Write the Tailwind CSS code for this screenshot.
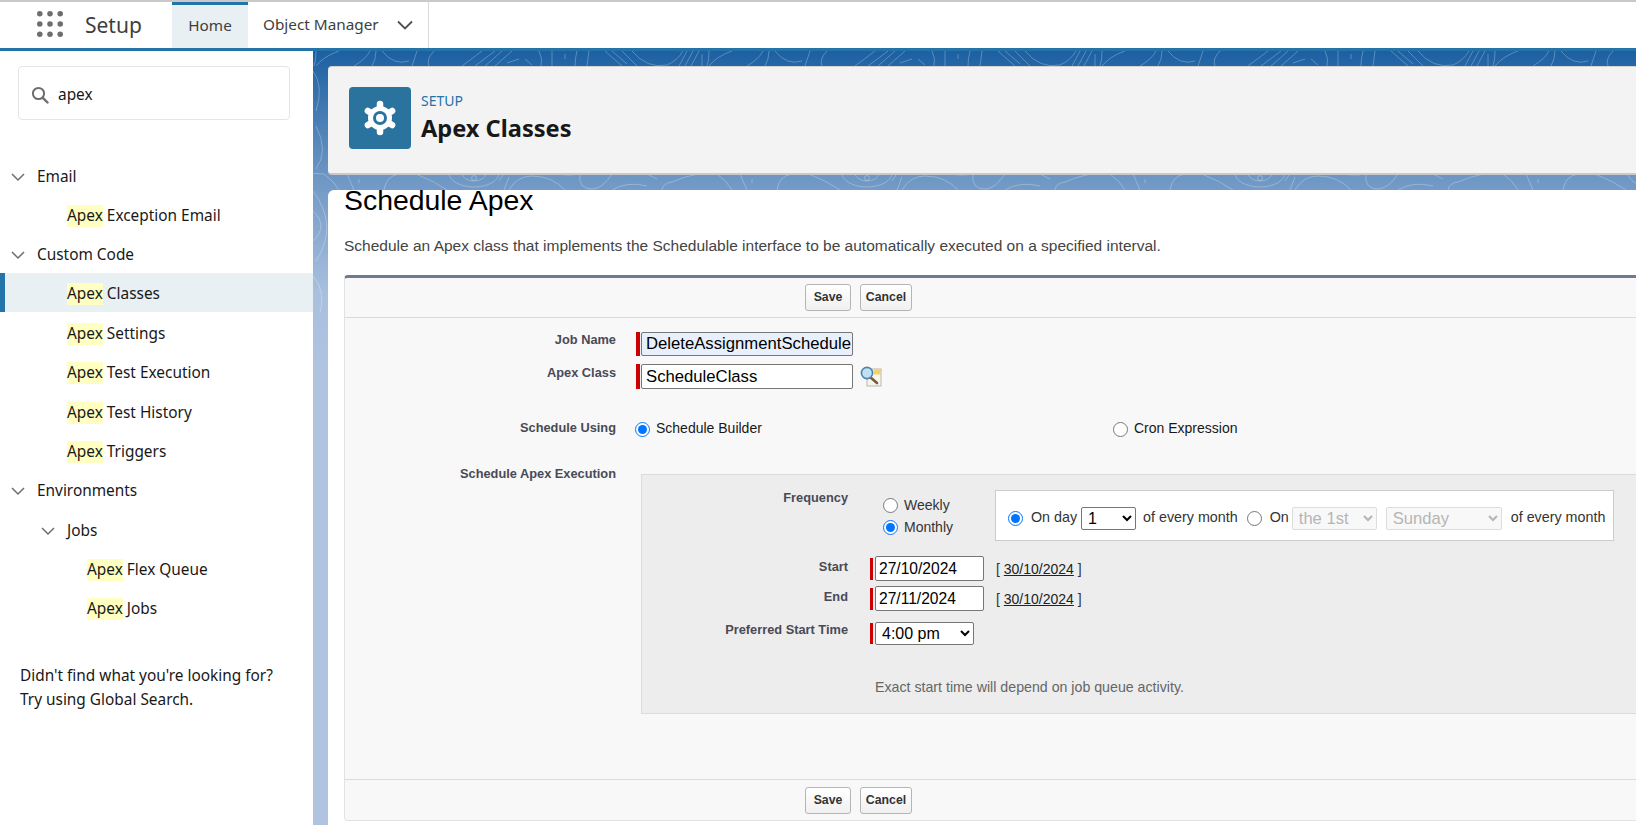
<!DOCTYPE html>
<html lang="en">
<head>
<meta charset="utf-8">
<title>Apex Classes</title>
<script src="https://cdn.jsdelivr.net/npm/@tailwindcss/browser@4"></script>
</head>
<body class="w-[1636px] h-[825px] overflow-hidden bg-white font-['Noto_Sans',sans-serif] text-[#181818]">
<div class="flex flex-col h-full">
  <!-- top bar -->
  <header class="h-[51px] shrink-0 flex items-stretch bg-white border-t-2 border-t-[#c9c9c9] border-b-[3px] border-b-[#2574a9] box-border">
    <div class="w-[172px] shrink-0 flex items-center">
      <svg class="ml-[37px] -mt-[2px] w-[26px] h-[26px] text-[#706e6b]" viewBox="0 0 28 28" fill="currentColor">
        <circle cx="3" cy="3" r="3"/><circle cx="14" cy="3" r="3"/><circle cx="25" cy="3" r="3"/>
        <circle cx="3" cy="14" r="3"/><circle cx="14" cy="14" r="3"/><circle cx="25" cy="14" r="3"/>
        <circle cx="3" cy="25" r="3"/><circle cx="14" cy="25" r="3"/><circle cx="25" cy="25" r="3"/>
      </svg>
      <span class="ml-[22px] text-[21px] leading-none text-[#3e3e3c]">Setup</span>
    </div>
    <div class="w-[76px] shrink-0 flex items-center justify-center bg-[#e8f0f4] border-t-[3px] border-t-[#2574a9] text-[15.3px] text-[#3e3e3c] pb-[2px]">Home</div>
    <div class="w-[181px] shrink-0 flex items-center pl-[15px] border-r border-r-[#dddbda] text-[15.3px] text-[#3e3e3c]">
      <span class="-mt-[2px]">Object Manager</span>
      <svg class="ml-[18px] w-[16px] h-[16px] text-[#514f4d]" viewBox="0 0 16 16" fill="none" stroke="currentColor" stroke-width="1.8"><path d="M1 4.5 8 11.5 15 4.5"/></svg>
    </div>
  </header>

  <div class="flex flex-1 min-h-0">
    <!-- sidebar -->
    <aside class="w-[313px] shrink-0 bg-white text-[15.4px] leading-[20px]">
      <div class="ml-[18px] mr-[23px] mt-[15px] h-[54px] box-border border border-[#e5e5e5] rounded-[4px] flex items-center pl-[12px] pt-[4px]">
        <svg class="w-[18px] h-[18px] text-[#706e6b]" viewBox="0 0 18 18" fill="none" stroke="currentColor" stroke-width="2"><circle cx="7.5" cy="7.5" r="5.6"/><path d="M11.8 11.8 16.5 16.5" stroke-width="2.4" stroke-linecap="round"/></svg>
        <span class="ml-[9px]">apex</span>
      </div>
      <nav class="mt-[35px]">
        <div class="h-[39px] flex items-center pl-[11px] pt-[4px]"><svg class="w-[14px] h-[14px] mr-[12px] text-[#706e6b]" viewBox="0 0 14 14" fill="none" stroke="currentColor" stroke-width="1.5"><path d="M1 4 7 10 13 4"/></svg>Email</div>
        <div class="h-[39.5px] flex items-center pl-[67px] pt-[4px]"><span class="bg-[#ffffc2] py-[1px]">Apex</span>&nbsp;Exception Email</div>
        <div class="h-[39px] flex items-center pl-[11px] pt-[4px]"><svg class="w-[14px] h-[14px] mr-[12px] text-[#706e6b]" viewBox="0 0 14 14" fill="none" stroke="currentColor" stroke-width="1.5"><path d="M1 4 7 10 13 4"/></svg>Custom Code</div>
        <div class="h-[39px] flex items-center pl-[62px] pt-[4px] bg-[#e8f0f4] border-l-[5px] border-l-[#2574a9]"><span class="bg-[#ffffc2] py-[1px]">Apex</span>&nbsp;Classes</div>
        <div class="h-[40px] flex items-center pl-[67px] pt-[4px]"><span class="bg-[#ffffc2] py-[1px]">Apex</span>&nbsp;Settings</div>
        <div class="h-[39px] flex items-center pl-[67px] pt-[4px]"><span class="bg-[#ffffc2] py-[1px]">Apex</span>&nbsp;Test Execution</div>
        <div class="h-[40px] flex items-center pl-[67px] pt-[4px]"><span class="bg-[#ffffc2] py-[1px]">Apex</span>&nbsp;Test History</div>
        <div class="h-[39px] flex items-center pl-[67px] pt-[4px]"><span class="bg-[#ffffc2] py-[1px]">Apex</span>&nbsp;Triggers</div>
        <div class="h-[39px] flex items-center pl-[11px] pt-[4px]"><svg class="w-[14px] h-[14px] mr-[12px] text-[#706e6b]" viewBox="0 0 14 14" fill="none" stroke="currentColor" stroke-width="1.5"><path d="M1 4 7 10 13 4"/></svg>Environments</div>
        <div class="h-[40px] flex items-center pl-[41px] pt-[4px]"><svg class="w-[14px] h-[14px] mr-[12px] text-[#706e6b]" viewBox="0 0 14 14" fill="none" stroke="currentColor" stroke-width="1.5"><path d="M1 4 7 10 13 4"/></svg>Jobs</div>
        <div class="h-[39px] flex items-center pl-[87px] pt-[4px]"><span class="bg-[#ffffc2] py-[1px]">Apex</span>&nbsp;Flex Queue</div>
        <div class="h-[39px] flex items-center pl-[87px] pt-[4px]"><span class="bg-[#ffffc2] py-[1px]">Apex</span>&nbsp;Jobs</div>
      </nav>
      <p class="mt-[37px] ml-[20px] leading-[24px]">Didn't find what you're looking for?<br>Try using Global Search.</p>
    </aside>

    <!-- main -->
    <main class="relative flex-1 min-w-0 overflow-hidden bg-[linear-gradient(180deg,#1c60a2_0px,#7098c5_130px,#a8bfde_240px,#b0c4e0_320px)] pl-[15px] pt-[15px]">
      <svg class="absolute left-0 top-0 w-full h-[300px]" xmlns="http://www.w3.org/2000/svg" fill="none">
        <defs>
          <pattern id="topo" width="393" height="300" patternUnits="userSpaceOnUse" patternTransform="translate(134 0)">
            <g stroke="#ffffff" stroke-opacity="0.26" fill="none">
              <path d="M15 15 35 0M28 15 48 0M38 15 55 0M48 15 65 0M60 12 72 8M78 8 85 14M92 0Q96 8 94 15M105 0V15M118 3V8M130 0Q128 8 128 15M142 0 140 15"/>
              <path d="M158 0 175 15M165 0 180 13M175 0 190 15M185 0Q200 18 220 14 230 10 236 0M232 15 240 0M238 15 246 0M244 15 252 0M255 3V15M262 0Q262 10 260 15M285 0Q270 5 262 15"/>
              <path d="M300 15Q312 8 316 0M322 0Q322 8 318 15M328 0Q340 15 355 10M363 0 358 15M380 0Q372 8 375 15"/>
              <circle cx="27" cy="127" r="2.5"/><ellipse cx="27" cy="122" rx="25" ry="14"/><ellipse cx="27" cy="122" rx="12" ry="8"/>
              <path d="M52 130 56 124M57 139 62 126M62 139Q70 125 85 125 105 125 118 139M110 123Q125 125 130 123M133 123Q131 138 145 138 155 138 165 123M165 139Q180 130 200 135M200 123l10 5M215 139Q216 132 225 131 250 120 270 123 280 130 285 139M293 123 300 139M305 128V132M330 139Q332 125 345 123M362 123Q380 130 393 139"/>
              <path d="M259 20Q270 35 262 60M262 75Q275 100 262 118M259 140Q285 175 262 210M259 160Q275 175 259 190M259 225Q272 240 266 262"/>
            </g>
          </pattern>
        </defs>
        <rect width="100%" height="100%" fill="url(#topo)"/>
      </svg>

      <div class="relative w-[1320px]">
        <!-- page header -->
        <div class="h-[109px] box-border bg-[#f3f3f3] rounded-l-[4px] border-t border-t-[#d4d4d4] border-b-2 border-b-[#c9c9c9] flex items-center pl-[21px] pb-[4px]">
          <div class="w-[62px] h-[62px] bg-[#2a739e] rounded-[4px] flex items-center justify-center">
            <svg class="w-[36px] h-[36px]" viewBox="0 0 36 36">
              <g stroke="#fff" stroke-width="6.5" stroke-linecap="round">
                <path d="M18 4V32"/><path d="M5.9 11 30.1 25"/><path d="M5.9 25 30.1 11"/>
              </g>
              <circle cx="18" cy="18" r="12" fill="#fff"/>
              <circle cx="18" cy="18" r="7" fill="#2a739e"/>
              <circle cx="18" cy="18" r="4" fill="#fff"/>
            </svg>
          </div>
          <div class="ml-[10px] pb-[2px]">
            <div class="text-[14px] leading-[18px] text-[#2574a9] mb-[3px]">SETUP</div>
            <h1 class="text-[23.6px] leading-[30px] font-bold text-[#181818]">Apex Classes</h1>
          </div>
        </div>

        <!-- content -->
        <div class="flow-root mt-[15px] h-[641px] bg-white rounded-tl-[6px] font-['Liberation_Sans',sans-serif] pl-[16px]">
          <h2 class="text-[28.4px] leading-[32px] text-black -mt-[6px]">Schedule Apex</h2>
          <p class="mt-[20px] text-[15.5px] leading-[20px] text-[#444]">Schedule an Apex class that implements the Schedulable interface to be automatically executed on a specified interval.</p>

          <section class="mt-[19px] h-[546px] box-border bg-[#f8f8f8] border-t-[3px] border-t-[#6f7a94] border-l border-l-[#e0e3e5] border-b border-b-[#e0e3e5] rounded-[4px] flex flex-col">
            <div class="h-[40px] shrink-0 border-b border-b-[#dbdbdb] pl-[460px] pt-[6px] flex gap-[9px] items-start">
              <button class="h-[27px] w-[46px] border border-[#b5b5b5] rounded-[3px] bg-[linear-gradient(#fff,#f0f0f0)] text-[12.3px] font-bold text-[#333]">Save</button>
              <button class="h-[27px] w-[52px] border border-[#b5b5b5] rounded-[3px] bg-[linear-gradient(#fff,#f0f0f0)] text-[12.3px] font-bold text-[#333]">Cancel</button>
            </div>

            <div class="flex-1 relative">
              <div class="flex h-[24px] mt-[14px]">
                <label class="w-[271px] text-right text-[12.8px] font-bold text-[#4a4a56] -mt-[2px]">Job Name</label>
                <span class="ml-[20px] w-[4px] h-[24px] bg-[#c00]"></span>
                <input class="ml-[1px] w-[212px] h-[24px] border border-[#767676] rounded-[2px] bg-[#e8f0fe] text-[16.7px] text-black pl-[4px] pr-0" value="DeleteAssignmentSchedule">
              </div>
              <div class="flex h-[25px] mt-[8px]">
                <label class="w-[271px] text-right text-[12.8px] font-bold text-[#4a4a56] -mt-[1px]">Apex Class</label>
                <span class="ml-[20px] w-[4px] h-[25px] bg-[#c00]"></span>
                <input class="ml-[1px] w-[212px] h-[25px] border border-[#767676] rounded-[2px] bg-white text-[16.7px] text-black pl-[4px] pr-0" value="ScheduleClass">
                <svg class="ml-[7px] mt-[2px] w-[22px] h-[21px]" viewBox="0 0 22 21">
                  <rect x="7" y="3" width="14" height="17" fill="#f5f5ee" stroke="#b8b8a8"/>
                  <rect x="14" y="3.5" width="6.5" height="5" fill="#f6cf6e"/>
                  <path d="M10 11 17 17" stroke="#7a5a3c" stroke-width="2.6" stroke-linecap="round"/>
                  <circle cx="7" cy="7" r="5.6" fill="#bfe0f5" stroke="#4c86b0" stroke-width="1.6"/>
                </svg>
              </div>
              <div class="flex items-center h-[20px] mt-[30px]">
                <label class="w-[271px] text-right text-[12.8px] font-bold text-[#4a4a56] -mt-[3px]">Schedule Using</label>
                <input type="radio" name="using" checked class="ml-[19px] m-0 w-[15px] h-[15px] accent-[#0075ff] shrink-0">
                <span class="ml-[6px] w-[457px] text-[14px] leading-[16px] -mt-[2px]">Schedule Builder</span>
                <input type="radio" name="using" class="m-0 w-[15px] h-[15px] shrink-0">
                <span class="ml-[6px] text-[14px] leading-[16px] -mt-[2px]">Cron Expression</span>
              </div>
              <div class="flex mt-[29px]">
                <label class="w-[271px] text-right text-[12.8px] font-bold text-[#4a4a56] leading-[14px] -mt-[1px]">Schedule Apex Execution</label>
                <div class="ml-[25px] mt-[6px] w-[1000px] h-[240px] box-border bg-[#ededed] border border-[#dcdcdc] relative">
                  <!-- frequency -->
                  <div class="flex h-[68px] mt-[15px]">
                    <label class="w-[206px] text-right text-[12.8px] font-bold text-[#4a4a56] -mt-[2px]">Frequency</label>
                    <div class="ml-[35px] w-[112px] pt-[5px] text-[14px] text-[#333]">
                      <div class="flex items-center h-[20px]"><input type="radio" name="freq" class="m-0 w-[15px] h-[15px] shrink-0"><span class="ml-[6px]">Weekly</span></div>
                      <div class="flex items-center h-[20px] mt-[2px]"><input type="radio" name="freq" checked class="m-0 w-[15px] h-[15px] accent-[#0075ff] shrink-0"><span class="ml-[6px]">Monthly</span></div>
                    </div>
                    <div class="w-[619px] h-[51px] box-border bg-white border border-[#ccc] flex items-center text-[14.3px] text-[#333] pl-[12px] pt-[6px]">
                      <input type="radio" name="day" checked class="m-0 w-[15px] h-[15px] accent-[#0075ff] shrink-0">
                      <span class="ml-[8px] -mt-[1px]">On day</span>
                      <select class="ml-[4px] w-[55px] h-[23px] border border-[#767676] rounded-[2px] bg-white text-[16px] text-black pl-[2px]"><option>1</option></select>
                      <span class="ml-[7px] -mt-[1px]">of every month</span>
                      <input type="radio" name="day" class="ml-[9px] m-0 w-[15px] h-[15px] shrink-0">
                      <span class="ml-[8px] -mt-[1px]">On</span>
                      <select disabled class="ml-[3px] w-[85px] h-[23px] border border-[#ddd] rounded-[2px] bg-[#f8f8f8] text-[16.6px] text-[#b5b5b5] pl-[2px]"><option>the 1st</option></select>
                      <select disabled class="ml-[9px] w-[116px] h-[23px] border border-[#ddd] rounded-[2px] bg-[#f8f8f8] text-[16.6px] text-[#b5b5b5] pl-[2px]"><option>Sunday</option></select>
                      <span class="ml-[9px] -mt-[1px]">of every month</span>
                    </div>
                  </div>
                  <!-- start -->
                  <div class="flex h-[25px] mt-[-2px]">
                    <label class="w-[206px] text-right text-[12.8px] font-bold text-[#4a4a56] pt-[1px]">Start</label>
                    <span class="ml-[22px] mt-[2px] w-[3px] h-[22px] bg-[#c00]"></span>
                    <input class="ml-[2px] w-[109px] h-[25px] border border-[#767676] rounded-[2px] bg-white text-[15.6px] text-black px-[3px]" value="27/10/2024">
                    <span class="ml-[12px] mt-[3px] text-[14px] text-[#333]">[ <span class="underline text-[#222]">30/10/2024</span> ]</span>
                  </div>
                  <div class="flex h-[25px] mt-[5px]">
                    <label class="w-[206px] text-right text-[12.8px] font-bold text-[#4a4a56] pt-[1px]">End</label>
                    <span class="ml-[22px] mt-[2px] w-[3px] h-[22px] bg-[#c00]"></span>
                    <input class="ml-[2px] w-[109px] h-[25px] border border-[#767676] rounded-[2px] bg-white text-[15.6px] text-black px-[3px]" value="27/11/2024">
                    <span class="ml-[12px] mt-[3px] text-[14px] text-[#333]">[ <span class="underline text-[#222]">30/10/2024</span> ]</span>
                  </div>
                  <div class="flex h-[23px] mt-[11px]">
                    <label class="w-[206px] text-right text-[12.8px] font-bold text-[#4a4a56] -mt-[2px]">Preferred Start Time</label>
                    <span class="ml-[22px] mt-[1px] w-[3px] h-[21px] bg-[#c00]"></span>
                    <select class="ml-[2px] w-[99px] h-[23px] border border-[#767676] rounded-[2px] bg-white text-[16px] text-black pl-[2px]"><option>4:00 pm</option></select>
                  </div>
                  <p class="mt-[34px] ml-[233px] text-[14.2px] leading-[16px] text-[#666]">Exact start time will depend on job queue activity.</p>
                </div>
              </div>
            </div>

            <div class="h-[41px] shrink-0 border-t border-t-[#dbdbdb] pl-[460px] pt-[7px] flex gap-[9px] items-start">
              <button class="h-[27px] w-[46px] border border-[#b5b5b5] rounded-[3px] bg-[linear-gradient(#fff,#f0f0f0)] text-[12.3px] font-bold text-[#333]">Save</button>
              <button class="h-[27px] w-[52px] border border-[#b5b5b5] rounded-[3px] bg-[linear-gradient(#fff,#f0f0f0)] text-[12.3px] font-bold text-[#333]">Cancel</button>
            </div>
          </section>
        </div>
      </div>
    </main>
  </div>
</div>
</body>
</html>
